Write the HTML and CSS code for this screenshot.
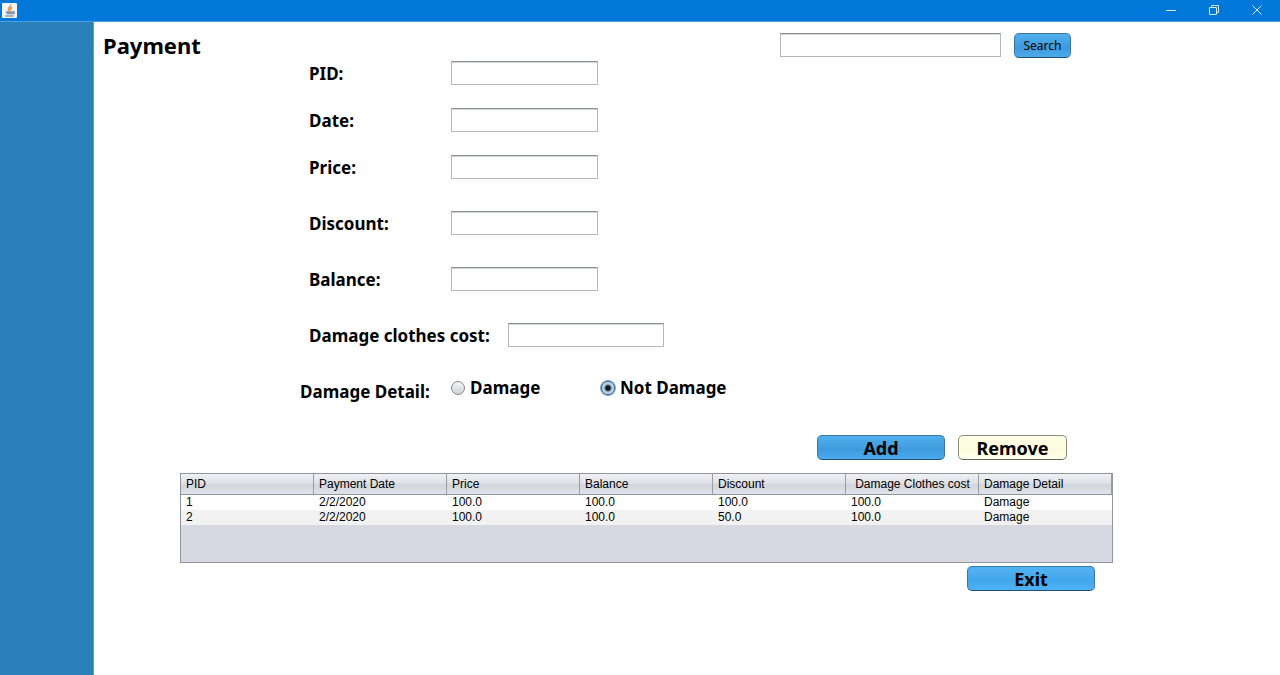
FILE: index.html
```html
<!DOCTYPE html>
<html lang="en">
<head>
<meta charset="utf-8">
<title>Payment</title>
<link rel="stylesheet" href="styles.css">
</head>
<body>
<header class="titlebar">
  <svg class="app-icon" viewBox="0 0 14 14" aria-hidden="true">
    <rect width="14" height="14" rx="1" fill="#f3f4f3"/>
    <path d="M8 1.500C8.500 3.500 4.500 4.500 6.500 7.500M9.500 4C7.500 5 7.500 6 8 7.500" fill="none" stroke="#dd9a50" stroke-width="1.400"/>
    <path d="M3.500 8.500h6.500M4.500 10h5M3 12.200h8M10 8.300c2.500-.5 2 1.700-.5 2" fill="none" stroke="#58758d"/>
  </svg>
  <div class="window-controls">
    <button type="button" class="window-button" aria-label="Minimize">
      <svg class="window-icon" viewBox="0 0 12 12"><path d="M1 6.500h10"/></svg>
    </button>
    <button type="button" class="window-button" aria-label="Restore">
      <svg class="window-icon" viewBox="0 0 12 12"><path d="M1.500 3.500h7v7h-7zM3.500 3.500v-2h7v7h-2"/></svg>
    </button>
    <button type="button" class="window-button" aria-label="Close">
      <svg class="window-icon" viewBox="0 0 12 12"><path d="M1.500 1.500l9 9M10.500 1.500l-9 9"/></svg>
    </button>
  </div>
</header>
<div class="workspace">
  <aside class="sidebar"></aside>
  <main class="content">
    <div class="page-head">
      <h1 class="page-title">Payment</h1>
      <form class="search">
        <input class="field search-field" type="text" aria-label="Search text">
        <button type="button" class="button search-button">Search</button>
      </form>
    </div>
    <form class="payment-form">
      <div class="row"><label class="label" for="pid">PID:</label><input class="field" id="pid" type="text"></div>
      <div class="row"><label class="label" for="date">Date:</label><input class="field" id="date" type="text"></div>
      <div class="row"><label class="label" for="price">Price:</label><input class="field" id="price" type="text"></div>
      <div class="row row-spaced"><label class="label" for="discount">Discount:</label><input class="field" id="discount" type="text"></div>
      <div class="row row-spaced"><label class="label" for="balance">Balance:</label><input class="field" id="balance" type="text"></div>
      <div class="row row-spaced"><label class="label label-wide" for="cost">Damage clothes cost:</label><input class="field field-wide" id="cost" type="text"></div>
      <div class="row row-detail" role="radiogroup" aria-labelledby="detail">
        <span class="label label-detail" id="detail">Damage Detail:</span>
        <label class="option"><input class="radio" type="radio" name="detail">Damage</label>
        <label class="option"><input class="radio" type="radio" name="detail" checked>Not Damage</label>
      </div>
    </form>
    <div class="actions">
      <button type="button" class="button button-large">Add</button>
      <button type="button" class="button button-remove">Remove</button>
    </div>
    <div class="table-pane">
      <table class="payments">
        <thead>
          <tr><th>PID</th><th>Payment Date</th><th>Price</th><th>Balance</th><th>Discount</th><th class="centered">Damage Clothes cost</th><th>Damage Detail</th></tr>
        </thead>
        <tbody>
          <tr><td>1</td><td>2/2/2020</td><td>100.0</td><td>100.0</td><td>100.0</td><td>100.0</td><td>Damage</td></tr>
          <tr><td>2</td><td>2/2/2020</td><td>100.0</td><td>100.0</td><td>50.0</td><td>100.0</td><td>Damage</td></tr>
        </tbody>
      </table>
    </div>
    <div class="footer">
      <button type="button" class="button button-large button-exit">Exit</button>
    </div>
  </main>
</div>
</body>
</html>
```
FILE: styles.css
```css
* { box-sizing: border-box; }
body {
  margin: 0;
  min-height: 100vh;
  display: flex;
  flex-direction: column;
  background: #fff;
  color: #000;
  font-family: "Noto Sans", "Open Sans", sans-serif;
}
.titlebar {
  height: 22px;
  padding: 0 2px;
  display: flex;
  align-items: center;
  justify-content: space-between;
  background: #0078d9;
  border-bottom: 1px solid #4b9fe2;
}
.app-icon { width: 15px; height: 15px; }
.window-controls { display: flex; }
.window-button {
  width: 43px;
  height: 20px;
  padding: 0 0 2px;
  display: flex;
  align-items: center;
  justify-content: center;
  border: 0;
  background: none;
}
.window-icon { width: 12px; height: 12px; fill: none; stroke: #d5eafa; stroke-width: 1; }
.workspace { flex: 1; display: flex; }
.sidebar { width: 94px; background: #2980b9; border-right: 1px solid #5b9fca; }
.content { flex: 1; min-width: 0; padding-top: 11px; }
.page-head {
  display: flex;
  align-items: center;
  justify-content: space-between;
  padding: 0 209px 0 9px;
}
.page-title { margin: 0; font-size: 22px; line-height: 25px; font-weight: 700; }
.search { display: flex; align-items: flex-start; gap: 13px; }
.field {
  width: 147px;
  height: 24px;
  padding: 2px 6px;
  border: 1px solid #b5b8b8;
  border-top-color: #8c9090;
  background: #fff;
  box-shadow: inset 0 1px #d5d7d7;
  font: 12px "Liberation Sans", sans-serif;
}
.search-field { width: 221px; }
.button {
  height: 25px;
  padding: 0;
  border: 1px solid #3978a5;
  border-bottom-color: #204f72;
  border-radius: 5px;
  background: linear-gradient(#53b0ed, #3d9ade 60%, #4cabed);
  color: #000;
  font: 700 18px/20px "Noto Sans", sans-serif;
}
.search-button { width: 57px; font-size: 12px; font-weight: 400; }
.payment-form {
  display: flex;
  flex-direction: column;
  gap: 22px;
  padding: 3px 0 0 215px;
}
.row { display: flex; align-items: flex-start; }
.row-spaced { margin-top: 9px; }
.label { width: 142px; font-size: 17px; line-height: 25px; font-weight: 700; }
.label-wide { width: 199px; }
.field-wide { width: 156px; }
.row-detail { margin: 5px 0 0 -9px; }
.label-detail { width: 151px; padding-top: 4px; }
.option {
  display: flex;
  align-items: center;
  gap: 5px;
  width: 150px;
  font-size: 17px;
  line-height: 25px;
  font-weight: 700;
}
.radio {
  appearance: none;
  width: 14px;
  height: 14px;
  margin: 0;
  border: 1px solid #85878b;
  border-radius: 50%;
  background: linear-gradient(#f4f4f5, #cfd2d8);
}
.radio:checked {
  border-color: #305878;
  background: radial-gradient(circle, #101820 0 2px, #a9c8e2 4px, #d5e6f3 6px);
  box-shadow: 0 0 0 1px #78a4c6;
}
.actions { display: flex; justify-content: flex-end; gap: 13px; padding: 31px 213px 0 0; }
.button-large { width: 128px; }
.button-remove {
  width: 109px;
  border-color: #8e8e7c;
  border-bottom-color: #66665a;
  background: linear-gradient(#ffffe6, #fdfddd 60%, #ffffec);
}
.table-pane {
  min-height: 90px;
  margin: 13px 167px 0 86px;
  border: 1px solid #92959e;
  background: #d6d9e1;
}
.payments {
  width: 100%;
  table-layout: fixed;
  border-collapse: separate;
  border-spacing: 0;
  font: 12px/15px "Liberation Sans", sans-serif;
}
.payments th {
  height: 21px;
  padding: 0 4px 0 5px;
  border-right: 1px solid #9a9da7;
  border-bottom: 1px solid #92959e;
  background: linear-gradient(#f0f1f4, #dcdfe5 50%, #d2d5dc 51%, #dfe2e8);
  font-weight: 400;
  text-align: left;
  white-space: nowrap;
}
.payments .centered { text-align: center; }
.payments td { height: 15px; padding: 0 5px; background: #fff; }
.payments tbody tr:nth-child(even) td { background: #f2f2f2; }
.footer { display: flex; justify-content: flex-end; padding: 3px 185px 0 0; }
.button-exit { background: linear-gradient(#53b1f1, #43a7ec 60%, #4eb2f5); }
```
